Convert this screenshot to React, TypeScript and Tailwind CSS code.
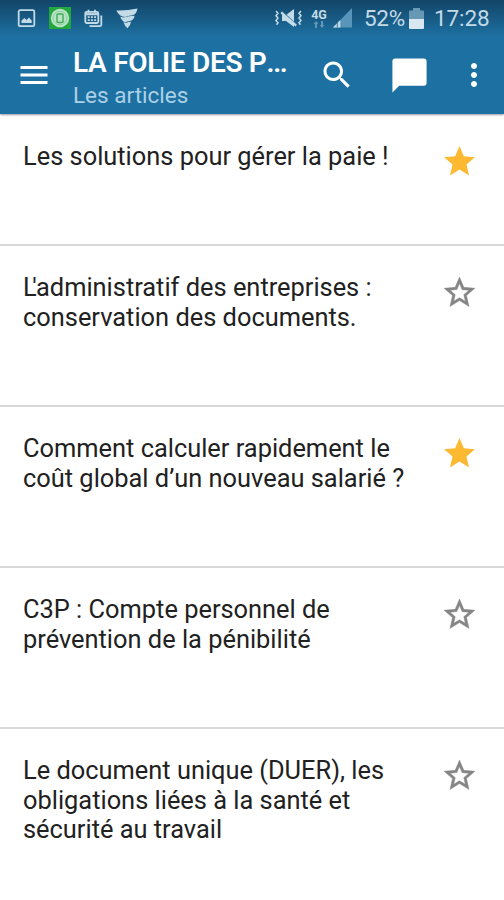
import React from "react";

type Article = {
  lines: string[];
  favorite: boolean;
};

const articles: Article[] = [
  { lines: ["Les solutions pour gérer la paie !"], favorite: true },
  {
    lines: ["L'administratif des entreprises :", "conservation des documents."],
    favorite: false,
  },
  {
    lines: ["Comment calculer rapidement le", "coût global d’un nouveau salarié ?"],
    favorite: true,
  },
  {
    lines: ["C3P : Compte personnel de", "prévention de la pénibilité"],
    favorite: false,
  },
  {
    lines: [
      "Le document unique (DUER), les",
      "obligations liées à la santé et",
      "sécurité au travail",
    ],
    favorite: false,
  },
];

const Star: React.FC<{ filled: boolean }> = ({ filled }) => (
  <svg
    viewBox="0 0 24 24"
    className={
      filled
        ? "w-[37px] h-[37px] shrink-0 fill-[#fdb932]"
        : "w-[37px] h-[37px] shrink-0 fill-[#858585] stroke-[#858585] stroke-[0.3]"
    }
  >
    {filled ? (
      <path d="M12 17.27L18.18 21l-1.64-7.03L22 9.24l-7.19-.61L12 2 9.19 8.63 2 9.24l5.46 4.73L5.82 21z" />
    ) : (
      <path d="M22 9.24l-7.19-.62L12 2 9.19 8.63 2 9.24l5.46 4.73L5.82 21 12 17.27 18.18 21l-1.63-7.03L22 9.24zM12 15.4l-3.76 2.27 1-4.28-3.32-2.88 4.38-.38L12 6.1l1.71 4.04 4.38.38-3.32 2.88 1 4.28L12 15.4z" />
    )}
  </svg>
);

const StatusBar: React.FC = () => (
  <div className="flex items-center justify-between h-9 pl-[17px] pr-[14px] text-[#c3dae7]">
    <div className="flex items-center">
      <svg viewBox="0 0 19 19" className="w-[19px] h-[19px]">
        <rect x="1.7" y="1.2" width="15.6" height="16" rx="1.5" fill="none" stroke="currentColor" strokeWidth="1.8" />
        <path d="M4.5 14v-2.5l3-2.5 2 2 2.5-2.5 2.7 3V14z" fill="currentColor" />
      </svg>
      <svg viewBox="0 0 22 22" className="w-[22px] h-[22px] ml-[13px]">
        <rect width="22" height="22" fill="#22a83c" />
        <circle cx="11" cy="11" r="9.2" fill="#b9e3c5" />
        <circle cx="11" cy="11" r="6.8" fill="none" stroke="#8fd0a1" strokeWidth="1" />
        <rect x="8" y="7" width="6" height="8.5" rx="1" fill="#b9e3c5" stroke="#3fa957" strokeWidth="1.4" />
      </svg>
      <svg viewBox="0 0 19 19" className="w-[19px] h-[19px] ml-[13px]" fill="none" stroke="currentColor">
        <rect x="1.3" y="2.8" width="13" height="11.2" rx="1.5" strokeWidth="1.8" />
        <path d="M1 5.2h13.5" strokeWidth="2.2" />
        <path d="M4.5 .7v3M11 .7v3" strokeWidth="1.8" />
        <path d="M3.7 8.2h8.5M3.7 11.2h8.5" strokeWidth="1.7" strokeDasharray="2 1.2" />
        <path d="M5.5 17.2h10.3q1.5 0 1.5-1.5V6.5" strokeWidth="1.8" />
      </svg>
      <svg viewBox="0 0 22 21" className="w-[22px] h-[21px] ml-[13px]" fill="currentColor">
        <path d="M.3 2.5Q10 3 21.5.6q-1 6-5 6.6-5 .5-7.5 1.9Q3.2 8.5.3 2.5z" />
        <path d="M4.2 8.8l3.5.7q5-1.8 11-1.8-1.2 4.8-4.8 5.3-3 .3-4.4 1.4Q6 13.500 4.2 8.8z" />
        <path d="M7.5 14.3l2.5.7q2-1.2 5-1.3-.5 4-3.5 6.6Q8.800 18.300 7.5 14.3z" />
      </svg>
    </div>
    <div className="flex items-center">
      <svg viewBox="0 0 28 20" className="w-7 h-5" fill="none" stroke="currentColor">
        <path d="M7 7h4l8-6v18l-8-6H7z" fill="currentColor" stroke="none" />
        <path d="M6 2.500l15 14" stroke="#195f8d" strokeWidth="1.6" />
        <path d="M6.2 4.4l15 13.2" strokeWidth="2.2" />
        <path d="M1 3l2 2.3-2 2.4 2 2.4-2 2.4 2 2.3-1.500 2M26 3l-2 2.3 2 2.4-2 2.4 2 2.4-2 2.3 1.500 2" strokeWidth="1.5" />
      </svg>
      <div className="flex flex-col items-center ml-[8px] w-4">
        <span className="text-[12.5px] leading-[12px] font-bold">4G</span>
        <svg viewBox="0 0 12 7" className="w-3 h-[7px] fill-[#5f96b9]">
          <path d="M3 0l2.5 3H4v4H2V3H.5zM8 0h2v4h1.5L9 7 6.5 4H8z" />
        </svg>
      </div>
      <svg viewBox="0 0 20 20" className="w-5 h-5 ml-[5px]">
        <path d="M20 0v19.5H1z" fill="#5995ba" />
        <path d="M8.3 12v7.5H1z" fill="currentColor" />
        <path d="M5.3 14.5v5" stroke="#195f8d" strokeWidth=".8" />
      </svg>
      <span className="w-[42px] ml-[12px] text-[22.5px] leading-6 whitespace-nowrap tracking-[-0.3px]">52%</span>
      <svg viewBox="0 0 15 21" className="w-[15px] h-[21px] ml-[3px]">
        <path d="M4 0h7v2.5h3q1 0 1 1V11H0V3.5q0-1 1-1h3z" fill="#6798b4" />
        <path d="M0 11h15v9q0 1-1 1H1q-1 0-1-1z" fill="#d9e8f0" />
      </svg>
      <span className="w-[56px] ml-[10px] text-[22.5px] leading-6 whitespace-nowrap tracking-[-0.1px]">17:28</span>
    </div>
  </div>
);

const Toolbar: React.FC = () => (
  <div className="flex items-center h-[78px] pl-4 pr-3 fill-white">
    <svg viewBox="0 0 24 24" className="w-9 h-9 shrink-0">
      <path d="M3 18h18v-2H3v2zm0-5h18v-2H3v2zm0-7v2h18V6H3z" />
    </svg>
    <div className="ml-[21px] w-[214px] shrink-0 pt-[7px]">
      <h1 className="text-[28px] leading-[34px] -mb-0.5 font-semibold text-white whitespace-nowrap tracking-[-0.3px]">
        LA FOLIE DES P<span className="tracking-[-1.3px]">...</span>
      </h1>
      <div className="text-[22.5px] leading-[34px] text-[#abd0e6] whitespace-nowrap">
        Les articles
      </div>
    </div>
    <svg viewBox="0 0 24 24" className="w-9 h-9 shrink-0 ml-[32px]">
      <path d="M15.5 14h-.79l-.28-.27C15.41 12.59 16 11.11 16 9.5 16 5.91 13.09 3 9.5 3S3 5.91 3 9.5 5.91 16 9.5 16c1.61 0 3.09-.59 4.23-1.57l.27.28v.79l5 4.99L20.49 19l-4.99-5zm-6 0C7.01 14 5 11.99 5 9.5S7.01 5 9.5 5 14 7.01 14 9.5 11.99 14 9.5 14z" />
    </svg>
    <svg viewBox="0 0 24 24" className="w-[41px] h-[41px] shrink-0 ml-[34px]">
      <path d="M20.5 2h-17C2.700 2 2 2.700 2 3.500V22l4-4h14.500c.8 0 1.500-.7 1.500-1.500v-13c0-.8-.7-1.500-1.500-1.500z" />
    </svg>
    <svg viewBox="0 0 24 24" className="w-9 h-9 shrink-0 ml-[26px]">
      <path d="M12 8c1.1 0 2-.9 2-2s-.9-2-2-2-2 .9-2 2 .9 2 2 2zm0 2c-1.1 0-2 .9-2 2s.9 2 2 2 2-.9 2-2-.9-2-2-2zm0 6c-1.1 0-2 .9-2 2s.9 2 2 2 2-.9 2-2-.9-2-2-2z" />
    </svg>
  </div>
);

// The apostrophe is pulled under the arm of a leading capital L.
const Line: React.FC<{ text: string }> = ({ text }) =>
  text.startsWith("L'") ? (
    <span className="block">
      <span className="tracking-[-4.5px]">L</span>
      {text.slice(1)}
    </span>
  ) : (
    <span className="block">{text}</span>
  );

const App: React.FC = () => {
  return (
    <div className="w-[504px] h-[900px] overflow-hidden bg-white font-['Roboto',sans-serif]">
      <header className="h-[114px] bg-[#1d71a2] bg-linear-to-b from-[#124568] via-[#1d71a2] via-32% to-[#1d71a2] shadow-[0_1px_2px_rgba(0,0,0,0.4)]">
        <StatusBar />
        <Toolbar />
      </header>
      <ul>
        {articles.map((article, index) => (
          <li
            key={index}
            className="flex items-start justify-between h-[161px] pt-[27px] pl-[23px] pr-[26px] border-b-2 border-[#d9d9d9] first:h-[132px] first:pt-[28px] last:border-b-0"
          >
            <p className="text-[25.4px] leading-[29.7px] text-[#212121] whitespace-nowrap">
              {article.lines.map((line) => (
                <Line key={line} text={line} />
              ))}
            </p>
            <div className="pt-[1px]">
              <Star filled={article.favorite} />
            </div>
          </li>
        ))}
      </ul>
    </div>
  );
};

export default App;
